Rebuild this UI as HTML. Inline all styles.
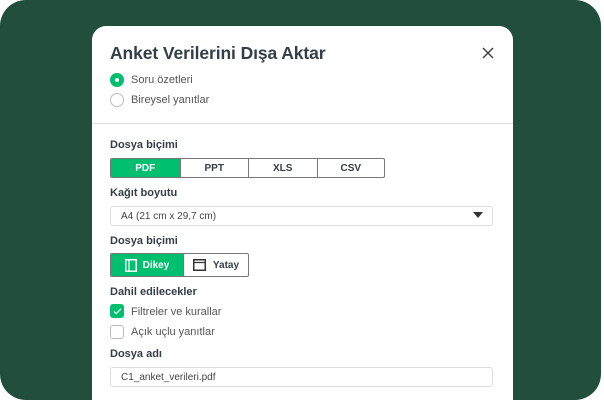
<!DOCTYPE html>
<html><head><style>
*{box-sizing:border-box;margin:0;padding:0}
body{width:604px;height:400px;background:#fff;font-family:"Liberation Sans",sans-serif;position:relative;overflow:hidden;color:#333e48}
.bg{position:absolute;left:0;top:0;width:601px;height:400px;background:#214e3d;border-radius:26px}
.card{position:absolute;left:92px;top:26px;width:421px;height:390px;background:#fff;border-radius:14px}
.a{position:absolute}
h1{position:absolute;left:18px;top:17px;font-size:17.5px;font-weight:bold;color:#333e48;letter-spacing:-0.1px}
.lab{position:absolute;left:18px;font-size:11px;font-weight:bold;color:#333e48}
.t{position:absolute;font-size:11px;color:#555}
.radio{position:absolute;left:18px;width:14px;height:14px;border-radius:50%;border:1px solid #bbb}
.radio.on{background:#00bf6f;border-color:#00bf6f}
.radio.on::after{content:"";position:absolute;left:4px;top:4px;width:4px;height:4px;border-radius:50%;background:#fff}
.seg{position:absolute;display:flex;border:1px solid #777;border-radius:2px;overflow:hidden}
.seg div{display:flex;align-items:center;justify-content:center;font-size:10px;font-weight:bold;color:#333e48;border-left:1px solid #777}
.seg div:first-child{border-left:none;background:#00bf6f;color:#fff}
.box{position:absolute;left:18px;width:383px;height:20px;border:1px solid #ddd;border-radius:3px;font-size:10px;color:#444;padding:4px 10px}
.cb{position:absolute;left:18px;width:14px;height:14px;border-radius:3px;border:1px solid #bbb}
</style></head><body>
<div class="bg"></div>
<div class="card">
<h1>Anket Verilerini Dışa Aktar</h1>
<svg class="a" style="left:390px;top:21px" width="12" height="12" viewBox="0 0 12 12"><path d="M1 1L11 11M11 1L1 11" stroke="#444" stroke-width="1.5"/></svg>
<div class="radio on" style="top:47px"></div><div class="t" style="left:39px;top:48px">Soru özetleri</div>
<div class="radio" style="top:67px"></div><div class="t" style="left:39px;top:68px">Bireysel yanıtlar</div>
<div class="a" style="left:0;top:97px;width:421px;height:1px;background:#ddd"></div>
<div class="lab" style="top:113px">Dosya biçimi</div>
<div class="seg" style="left:18px;top:132px;width:275px;height:20px">
<div style="width:69px">PDF</div><div style="width:69px">PPT</div><div style="width:69px">XLS</div><div style="width:68px">CSV</div></div>
<div class="lab" style="top:161px">Kağıt boyutu</div>
<div class="box" style="top:180px">A4 (21 cm x 29,7 cm)</div>
<svg class="a" style="left:381px;top:186px" width="10" height="7"><path d="M0 0H10L5 6Z" fill="#333"/></svg>
<div class="lab" style="top:209px">Dosya biçimi</div>
<div class="seg" style="left:18px;top:227px;width:139px;height:24px">
<div style="width:73px"><svg width="12" height="13" style="margin-right:6px"><rect x="0.75" y="0.75" width="10.5" height="11.5" fill="none" stroke="#fff" stroke-width="1.5"/><path d="M4 1v11" stroke="#fff" stroke-width="1.2"/></svg>Dikey</div>
<div style="width:66px"><svg width="13" height="12" style="margin-right:7px"><rect x="0.75" y="0.75" width="11.5" height="10.5" fill="none" stroke="#333" stroke-width="1.5"/><path d="M1 3.5h11" stroke="#333" stroke-width="1.2"/></svg>Yatay</div></div>
<div class="lab" style="top:260px">Dahil edilecekler</div>
<div class="cb" style="top:278px;background:#00bf6f;border-color:#00bf6f"><svg width="12" height="12" style="position:absolute;left:0;top:0"><path d="M3 6.5l2.2 2.2L10 3.8" stroke="#fff" stroke-width="1.2" fill="none"/></svg></div>
<div class="t" style="left:39px;top:280px">Filtreler ve kurallar</div>
<div class="cb" style="top:299px"></div>
<div class="t" style="left:39px;top:300px">Açık uçlu yanıtlar</div>
<div class="lab" style="top:322px">Dosya adı</div>
<div class="box" style="top:341px">C1_anket_verileri.pdf</div>
</div>
</body></html>
